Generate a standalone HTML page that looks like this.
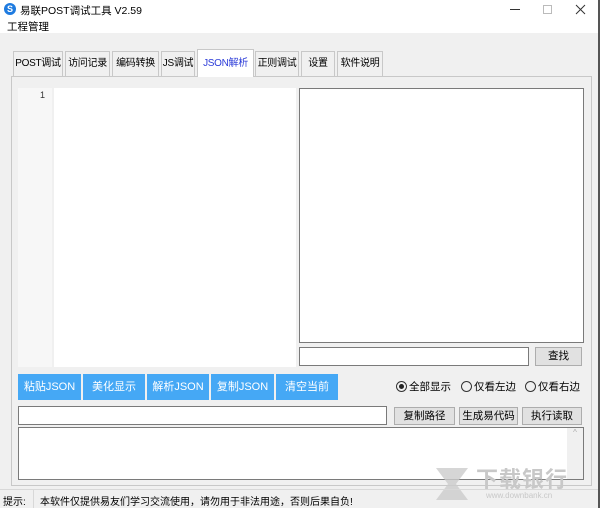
<html><head><style>
*{box-sizing:border-box}
body{margin:0;width:600px;height:508px;background:#f0f0f0;font-family:"Liberation Sans","Noto Sans CJK SC",sans-serif;font-size:10.5px;color:#000;position:relative;overflow:hidden}
.a{position:absolute;white-space:nowrap}
.tab{position:absolute;top:51px;height:25px;border:1px solid #c8c8c8;border-bottom:none;background:#f0f0f0;text-align:center;line-height:24px;font-size:10px;white-space:nowrap;overflow:hidden;letter-spacing:-0.3px}
.in{position:absolute;background:#fff;border:1px solid #7a7a7a}
.bb{position:absolute;top:374px;height:26px;background:#45a8f5;color:#fff;text-align:center;line-height:26px;font-size:11px;white-space:nowrap}
.btn{position:absolute;background:#e1e1e1;border:1px solid #adadad;text-align:center;line-height:16px;font-size:10.5px;white-space:nowrap}
.r{position:absolute;top:381px;font-size:10.5px;line-height:12px;white-space:nowrap}
.r i{display:inline-block;width:11px;height:11px;border:1px solid #333;border-radius:50%;vertical-align:-2px;margin-right:2px;position:relative}
</style></head><body>
<div class="a" style="left:0;top:0;width:598px;height:33px;background:#fff"></div>
<div class="a" style="left:598px;top:0;width:2px;height:508px;background:#555"></div>
<div class="a" style="left:4px;top:3px;width:12px;height:12px;border-radius:50%;background:#1e7be0;color:#fff;font-size:9px;text-align:center;line-height:12px;font-weight:bold">S</div>
<div class="a" style="left:20px;top:3px;font-size:10.5px">易联POST调试工具 V2.59</div>
<div class="a" style="left:7px;top:19px;font-size:10.5px">工程管理</div>
<div class="a" style="left:510px;top:9px;width:10px;height:1px;background:#333"></div>
<div class="a" style="left:543px;top:5px;width:9px;height:9px;border:1px solid #bbb"></div>
<svg class="a" style="left:575px;top:4px" width="11" height="11"><path d="M1 1L10 10M10 1L1 10" stroke="#333" stroke-width="1"/></svg>
<div class="a" style="left:11px;top:76px;width:581px;height:410px;border:1px solid #c8c8c8;background:#f0f0f0"></div>
<div class="tab" style="left:13px;width:50px">POST调试</div>
<div class="tab" style="left:65px;width:45px">访问记录</div>
<div class="tab" style="left:112px;width:47px">编码转换</div>
<div class="tab" style="left:161px;width:34px">JS调试</div>
<div class="tab" style="left:197px;top:49px;height:28px;width:57px;background:#fff;color:#2b3bd8;line-height:28px">JSON解析</div>
<div class="tab" style="left:255px;width:44px">正则调试</div>
<div class="tab" style="left:301px;width:34px">设置</div>
<div class="tab" style="left:337px;width:46px">软件说明</div>
<div class="a" style="left:18px;top:88px;width:278px;height:279px;background:#fff"></div>
<div class="a" style="left:18px;top:88px;width:36px;height:279px;background:#f7f7f7;border-right:2px solid #f0f0f0"></div>
<div class="a" style="left:40px;top:90px;font-size:9px;color:#333">1</div>
<div class="in" style="left:299px;top:88px;width:285px;height:255px"></div>
<div class="in" style="left:299px;top:347px;width:230px;height:19px"></div>
<div class="btn" style="left:535px;top:347px;width:47px;height:19px">查找</div>
<div class="bb" style="left:18px;width:63px">粘贴JSON</div>
<div class="bb" style="left:83px;width:62px">美化显示</div>
<div class="bb" style="left:147px;width:62px">解析JSON</div>
<div class="bb" style="left:211px;width:63px">复制JSON</div>
<div class="bb" style="left:276px;width:62px">清空当前</div>
<div class="r" style="left:396px"><i><b style="position:absolute;left:2px;top:2px;width:5px;height:5px;border-radius:50%;background:#222"></b></i>全部显示</div>
<div class="r" style="left:461px"><i></i>仅看左边</div>
<div class="r" style="left:525px"><i></i>仅看右边</div>
<div class="in" style="left:18px;top:406px;width:369px;height:19px"></div>
<div class="btn" style="left:394px;top:407px;width:61px;height:18px">复制路径</div>
<div class="btn" style="left:459px;top:407px;width:59px;height:18px">生成易代码</div>
<div class="btn" style="left:522px;top:407px;width:60px;height:18px">执行读取</div>
<div class="in" style="left:18px;top:427px;width:566px;height:53px"></div>
<div class="a" style="left:567px;top:428px;width:16px;height:51px;background:#f0f0f0;color:#aaa;font-size:8px;text-align:center">^</div>
<svg class="a" style="left:432px;top:464px" width="40" height="40"><path d="M4 4H36L24 20L36 36H4L16 20Z" fill="#ccc" opacity=".8"/></svg>
<div class="a" style="left:476px;top:462px;color:#c8c8c8;font-size:22px;font-weight:bold;letter-spacing:1px">下载银行</div>
<div class="a" style="left:486px;top:491px;color:#c8c8c8;font-size:8px">www.downbank.cn</div>
<div class="a" style="left:0;top:489px;width:598px;height:19px;border-top:1px solid #d8d8d8"></div>
<div class="a" style="left:33px;top:490px;width:1px;height:18px;background:#d8d8d8"></div>
<div class="a" style="left:3px;top:493px;font-size:10px">提示:</div>
<div class="a" style="left:40px;top:493px;font-size:10px">本软件仅提供易友们学习交流使用，请勿用于非法用途，否则后果自负!</div>
</body></html>
